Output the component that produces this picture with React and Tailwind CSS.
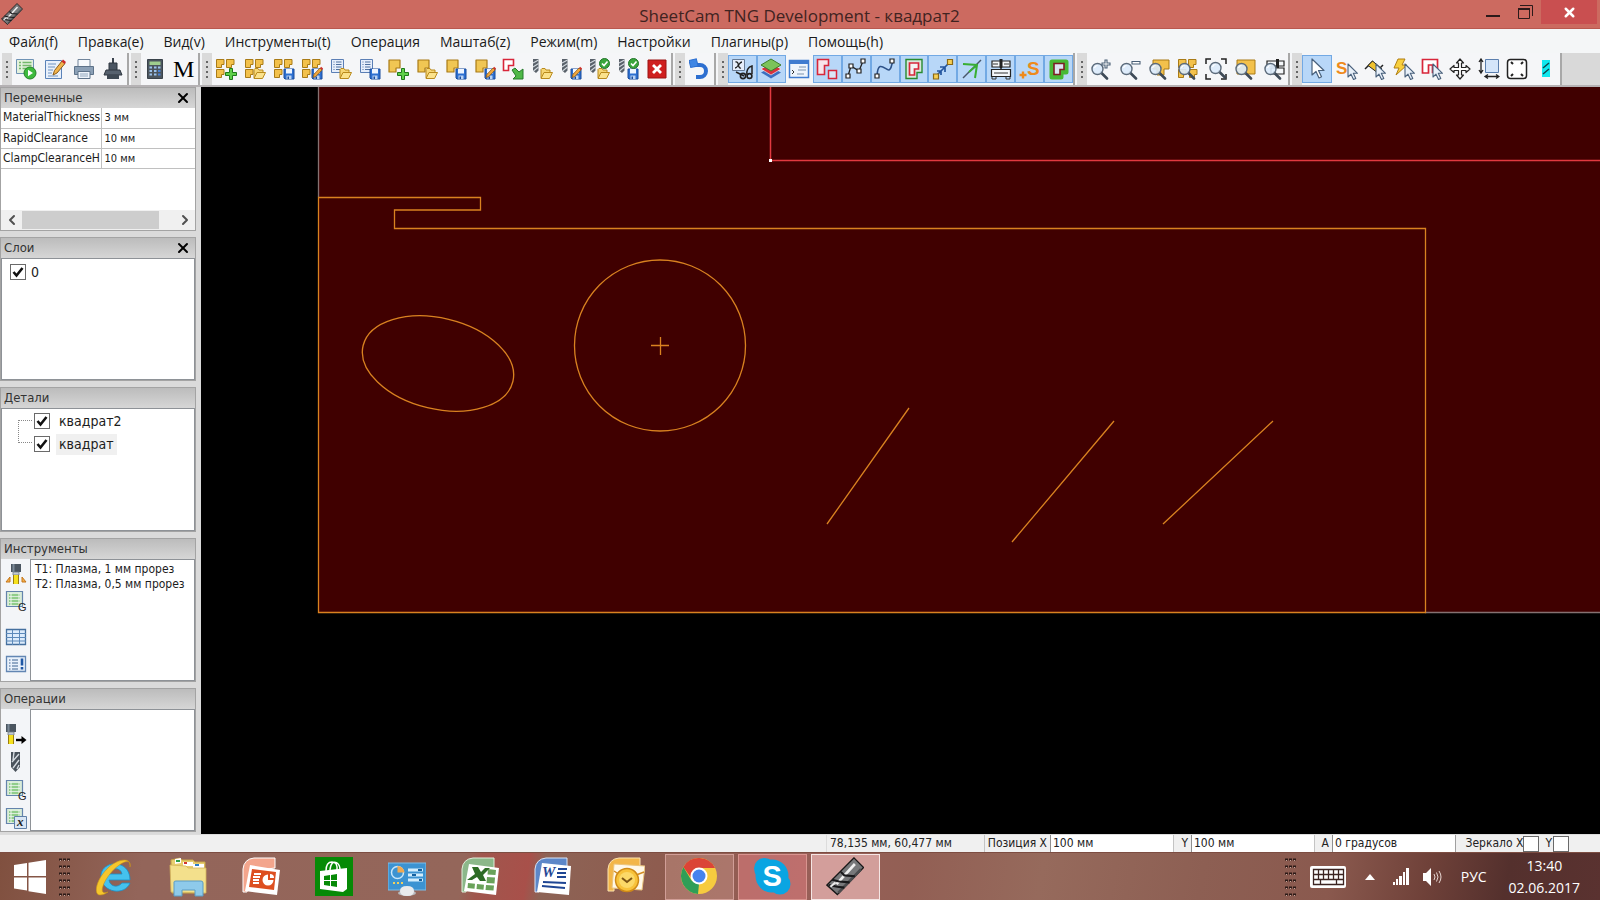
import { X, ChevronLeft, ChevronRight } from 'lucide-react'

const Icon = ({ children, size = 'size-[22px]' }) => (
  <svg viewBox="0 0 22 22" className={`${size} shrink-0`} fill="none" aria-hidden="true">
    {children}
  </svg>
)

/* small shapes the toolbar icons are put together from */

const YELLOW = '#f3c14b'
const OCHRE = '#a97b17'

const PartSmall = ({ x, y }) => (
  <path
    d="M0.5 0.5h7.500v5h-2.500v3h-5z"
    transform={`translate(${x} ${y})`}
    fill={YELLOW}
    stroke={OCHRE}
    strokeWidth="1"
    strokeLinejoin="round"
  />
)

const Parts = () => (
  <>
    <PartSmall x={1} y={1} />
    <PartSmall x={11} y={1} />
    <PartSmall x={1} y={11} />
  </>
)

const Part = () => (
  <path d="M2 2h11v8H9v4H2z" fill="#f0c653" stroke={OCHRE} strokeWidth="1.200" strokeLinejoin="round" />
)

const Folder = () => (
  <>
    <path d="M10 20V11.500l1-1h3l1 1.500h4v2" fill="#f6d675" stroke="#b98a1d" strokeLinejoin="round" />
    <path d="M10 20.500l3-6h8.500l-3 6z" fill="#fbe28c" stroke="#b98a1d" strokeLinejoin="round" />
  </>
)

const Floppy = () => (
  <>
    <path d="M11 11h10v10H12l-1-1z" fill="#2c6fd0" stroke="#1a4c9c" />
    <path d="M13 11h6v4.500h-6z" fill="#eef5ff" />
    <path d="M13.500 17.500h5V21h-5z" fill="#b9d3f5" />
    <path d="M14.500 18.500h1.500V21h-1.500z" fill="#1a4c9c" />
  </>
)

const Pencil = () => (
  <>
    <path d="M12 19.500l1-3.200L19 10l2 2-6.200 6.500z" fill="#f0a63c" stroke="#8d5c16" strokeWidth="0.800" />
    <path d="M19 10l1.200-1.200 2 2L21 12z" fill="#d0322c" />
  </>
)

const Plus = () => (
  <path
    d="M14.500 10.500h3v4h4v3h-4v4h-3v-4h-4v-3h4z"
    fill="#5fd04a"
    stroke="#1f7a1a"
    strokeLinejoin="round"
  />
)

const Doc = () => (
  <>
    <path d="M1.500 1.500h12v13h-12z" fill="#e6eefb" stroke="#5b7fb5" />
    <path d="M3.500 4h1M6 4h5.500M3.500 6.500h1M6 6.500h5.500M3.500 9h1M6 9h5.500M3.500 11.500h1M6 11.500h5.500" stroke="#4d6f9e" />
  </>
)

const Drill = () => (
  <>
    <path d="M2 1h5.500v11.500L5 15l-3-2.500z" fill="#59616a" />
    <path d="M2 5l5.500-3M2 9l5.500-3.500M2.500 13l5-4" stroke="#d3d9df" strokeWidth="1.100" />
  </>
)

const Check = () => (
  <>
    <circle cx="16.500" cy="5.500" r="5" fill="#3aa53c" stroke="#22752a" />
    <path d="M14 5.500l2 2 3.500-4" stroke="#fff" strokeWidth="1.600" />
  </>
)

const Lens = () => (
  <>
    <path d="M11 14.500l6 6" stroke="#3e4a57" strokeWidth="2.600" strokeLinecap="round" />
    <circle cx="7.500" cy="11" r="5.500" fill="#dcebfb" fillOpacity="0.900" stroke="#5c6b7b" strokeWidth="1.400" />
    <path d="M4.500 10a3.500 3.500 0 0 1 3-2.500" stroke="#fff" strokeWidth="1.200" />
  </>
)

const Pointer = ({ x = 0, y = 0 }) => (
  <path
    d="M1 1v13l3-2.800 2.500 5.300 2.300-1-2.500-5.200h4.200z"
    transform={`translate(${x} ${y})`}
    fill="#e9f1fa"
    stroke="#49617c"
    strokeWidth="1.100"
    strokeLinejoin="round"
  />
)

const Nodes = ({ points }) =>
  points.map(([x, y]) => (
    <path key={`${x}-${y}`} d="M0 0h4v4h-4z" transform={`translate(${x} ${y})`} fill="#fff" stroke="#222" strokeWidth="1.200" />
  ))

const Torch = () => (
  <>
    <path d="M6 1h10v8h-10z" fill="#4a5560" />
    <path d="M7.500 1h2v8h-2z" fill="#7b8a98" />
    <path d="M8 9h6v3H8z" fill="#c3cbd3" stroke="#6d7883" strokeWidth="0.800" />
    <path d="M8 12h6v9H8z" fill="#f5e11e" />
    <path d="M8.500 12v9M13.500 12v9" stroke="#9b7e10" />
  </>
)

const Sheet = () => (
  <>
    <path d="M1.500 1.500h16v15h-16z" fill="#d9ecd9" stroke="#6484ad" strokeWidth="1.200" />
    <path d="M4 5h11M4 8h11M4 11h11M4 14h11" stroke="#79c472" strokeWidth="1.600" />
    <path d="M6 3v13M14 3v13" stroke="#eef7ee" />
  </>
)

const CutTool = () => (
  <>
    <path d="M16 0.500L21.500 6 6.500 21.500 0.500 16z" fill="#77787a" stroke="#171717" strokeWidth="0.800" />
    <path d="M20 7L7 20.500" stroke="#4b4c4e" strokeWidth="1.500" />
    <path d="M6 15.500L16.500 4" stroke="#f0f0f0" strokeWidth="1.500" />
    <path d="M3.500 13l4 1 6 .5M1.500 16l5 1 4 .5M8.500 8.500l2 2 6 .5" stroke="#18181a" strokeWidth="1.200" />
    <path d="M2.500 17l3-2.500" stroke="#e8e8e8" strokeWidth="1.200" />
  </>
)

const groups = [
  {
    width: 'w-[115px]',
    tools: [
      ['Запуск', <><path d="M1.500 1.500h17v14h-17z" fill="#e4f1de" stroke="#6f93b5" /><path d="M4 4.500h2M7.500 4.500h9M4 7.500h2M7.500 7.500h9M4 10.500h2M7.500 10.500h4" stroke="#74b96c" strokeWidth="1.500" /><circle cx="15" cy="15" r="6" fill="#3dba3d" stroke="#258127" /><path d="M13 11.800v6.400l5-3.200z" fill="#fff" /></>],
      ['Изменить', <><path d="M1.500 2.500h16v18h-16z" fill="#e8f0fb" stroke="#5a82b8" /><path d="M4 6h8M4 9h7M4 12h5M4 15h4M4 18h10" stroke="#6f93c2" /><path d="M9 17l1.500-4.500L18 3l3 2.500-8 9.500z" fill="#f2b44c" stroke="#8a5d1c" /><path d="M17.500 3.500l1.500-2 3 2.500-1.500 2z" fill="#cc2b2b" /></>],
      ['Печать', <><path d="M5 1.500h12v7H5z" fill="#f6f9fc" stroke="#71849a" /><path d="M1.500 8.500h19v8h-19z" fill="#8ba0b6" stroke="#5d7289" strokeLinejoin="round" /><path d="M5 13.500h12v7H5z" fill="#eef4fb" stroke="#5d7289" /><path d="M7 16h8M7 18h8" stroke="#92a7bd" /></>],
      ['Станок', <><path d="M10 0h2v6h-2z" fill="#3a434d" /><path d="M7 5h8v8H7z" fill="#4b5663" stroke="#2f3740" /><path d="M4 12h14l2 5H2z" fill="#56616e" stroke="#2f3740" /><path d="M5 17h12v4H5z" fill="#3e4853" /></>],
    ],
  },
  {
    width: 'w-[57px]',
    tools: [
      ['Калькулятор', <><path d="M3.500 1.500h15v19h-15z" fill="#4c565f" stroke="#39424a" /><path d="M5.500 3.500h11v3.500h-11z" fill="#9fce8e" /><path d="M5.500 9.500h2.500M10 9.500h2.500M14 9.500h2.500M5.500 13h2.500M10 13h2.500M5.500 16.500h2.500M10 16.500h2.500" stroke="#9cc3ee" strokeWidth="2.200" /><path d="M14 13h2.500M14 16.500h2.500" stroke="#4a83d6" strokeWidth="2.200" /></>],
      ['Макрос', null, 'M'],
    ],
  },
  {
    width: 'w-[459px]',
    tools: [
      ['Новая работа', <><Parts /><Plus /></>],
      ['Открыть работу', <><Parts /><Folder /></>],
      ['Сохранить работу', <><Parts /><Floppy /></>],
      ['Сохранить работу как', <><Parts /><Floppy /><Pencil /></>],
      ['Открыть лист', <><Doc /><Folder /></>],
      ['Сохранить лист', <><Doc /><Floppy /></>],
      ['Новая деталь', <><Part /><Plus /></>],
      ['Открыть деталь', <><Part /><Folder /></>],
      ['Сохранить деталь', <><Part /><Floppy /></>],
      ['Сохранить деталь как', <><Part /><Floppy /><Pencil /></>],
      ['Импорт чертежа', <><path d="M1.500 1.500h10v6h-5v5h-5z" fill="#fff" stroke="#d8263a" strokeWidth="1.600" /><path d="M10 12l3-2 4 4 4-3v10h-10l3-3z" fill="#4fb848" stroke="#257a2a" /></>],
      ['Открыть инструменты', <><Drill /><Folder /></>],
      ['Сохранить инструменты', <><Drill /><Floppy /><Pencil /></>],
      ['Открыть набор', <><Drill /><Folder /><Check /></>],
      ['Сохранить набор', <><Drill /><Floppy /><Check /></>],
      ['Удалить', <><path d="M2 2h18v18H2z" fill="#cf1f1f" stroke="#9a1414" /><path d="M7 7l8 8M15 7l-8 8" stroke="#fff" strokeWidth="2.800" /></>],
    ],
  },
  {
    width: 'w-[29px]',
    tools: [
      ['Отменить', <><path d="M5 7h6a5.500 5.500 0 0 1 0 12H7" stroke="#2d6fd0" strokeWidth="4" /><path d="M1 8.500V1.500l7.500 0v7.500z" fill="#3f86e4" stroke="#2d6fd0" transform="rotate(-14 5 6)" /></>],
    ],
  },
  {
    width: 'w-[345px]',
    tools: [
      ['Переменные', <><path d="M1.500 1.500h12v11h-12z" fill="#e6eefb" stroke="#667a95" /><path d="M4.500 4c4-1 2 7 5.500 6M11 4c-3 0-4 6-7 6" stroke="#222" strokeWidth="1.300" /><path d="M5 14l8 4M16 17c-1-4 1-8 5-9v8" stroke="#222" strokeWidth="1.500" /><circle cx="12" cy="18" r="2.600" stroke="#222" strokeWidth="1.600" /><circle cx="18.500" cy="18" r="2.400" stroke="#222" strokeWidth="1.600" /></>, null, true],
      ['Слои', <><path d="M1 14.500l10 6 10-6-10-5z" fill="#3b6fc0" /><path d="M1 11l10 6 10-6-10-6z" fill="#d8323c" stroke="#fff" strokeWidth="0.600" /><path d="M1 7l10-6 10 6-10 6z" fill="#7cc35a" stroke="#3f7d2c" /></>, null, true],
      ['Консоль', <><path d="M1.500 2.500h19v17h-19z" fill="#eef4fc" stroke="#3f7bd0" strokeWidth="1.500" /><path d="M1 2h20v4H1z" fill="#3f7bd0" /><path d="M11 9h7M10 12h8M9 16h7" stroke="#7d93ad" /><path d="M4 12l2 2-2 2" stroke="#333" /></>],
      ['Контуры', <><path d="M1.500 1.500h11v6h-4v9h-7z" fill="#f8e4ea" stroke="#d8263a" strokeWidth="1.600" /><path d="M12.500 12.500h8v8h-8z" fill="#dbe6f7" stroke="#d8263a" strokeWidth="1.500" /></>, null, true],
      ['Сегменты', <><path d="M3 18l3-10 8 5 4-10" stroke="#222" strokeWidth="1.300" /><Nodes points={[[1, 16], [4, 6], [12, 11], [16, 1]]} /></>, null, true],
      ['Кривые', <><path d="M3 18c1-18 9-5 12-6s2-6 4-8" stroke="#2c5188" strokeWidth="1.600" /><Nodes points={[[1, 16], [16, 1]]} /></>, null, true],
      ['Траектория', <><path d="M3 1.500h16v13h-5v6H3z" fill="#d9e6dc" stroke="#278a2f" strokeWidth="1.400" /><path d="M6.500 5h9v6h-4v6h-5z" fill="#f3f3f3" stroke="#d8263a" strokeWidth="1.700" /></>, null, true],
      ['Переходы', <><path d="M4 18L18 4M8 9h5v5M5 13h4v4" stroke="#24569f" strokeWidth="1.700" /><path d="M1.500 16h5v5h-5zM15.500 1.500h5v5h-5z" fill="#f6cf55" stroke="#8b6914" strokeWidth="1.200" /></>, null, true],
      ['Направление', <><path d="M2 20L20 2" stroke="#49576b" strokeWidth="1.500" /><path d="M2 6l14 1-2 13M16 7L8 14" stroke="#39ae33" strokeWidth="2" /></>, null, true],
      ['Станок', <><path d="M2 3h18v6H2z" fill="#f4f7fa" stroke="#222" strokeWidth="1.200" /><path d="M1.500 11.500h19v7h-19z" fill="#f4f7fa" stroke="#222" strokeWidth="1.200" /><path d="M9.500 1h3v8l-1.500 3-1.500-3z" fill="#222" /><path d="M2 19v2h4v-2M16 19v2h4v-2M3 6h5M14 6h5M4 15h14" stroke="#333" /></>, null, true],
      ['Начальные точки', <><text x="8" y="17" fontSize="19" fontWeight="700" fontFamily="Liberation Sans, sans-serif" fill="#ee8a1c">S</text><path d="M0.500 17h7M4 13.500v7" stroke="#ee8a1c" strokeWidth="2.400" /></>, null, true],
      ['Ширина реза', <><path d="M4 4h14v10h-5v5H4z" fill="#3fae2f" stroke="#48b935" strokeWidth="5" strokeLinejoin="round" /><path d="M6 5.500h10v6h-4v5H6z" fill="#dde6f2" stroke="#7c1f22" strokeWidth="1.600" /></>, null, true],
    ],
  },
  {
    width: 'w-[201px]',
    tools: [
      ['Увеличить', <><Lens /><path d="M15 2h2v3h3v2h-3v3h-2V7h-3V5h3z" fill="#fff" stroke="#4a6076" strokeWidth="1.100" /></>],
      ['Уменьшить', <><Lens /><path d="M13 3.500h8v2.500h-8z" fill="#fff" stroke="#4a6076" strokeWidth="1.100" /></>],
      ['Масштаб детали', <><path d="M5 2h16v9h-5v6h-7V11H5z" fill={YELLOW} stroke={OCHRE} /><Lens /></>],
      ['Масштаб деталей', <><Parts /><PartSmall x={12} y={11} /><Lens /></>],
      ['Масштаб чертежа', <><path d="M1 6V1h5M16 1h5v5M1 16v5h5M16 21h5v-5" stroke="#222" strokeWidth="1.500" /><g transform="translate(3 -1)"><Lens /></g></>],
      ['Масштаб листа', <><path d="M3 2h18v14H3z" fill={YELLOW} stroke={OCHRE} /><Lens /></>],
      ['Масштаб станка', <><path d="M4 3h17v5H4zM8 10h13v6H8z" fill="#f4f7fa" stroke="#222" strokeWidth="1.200" /><path d="M13 1h3v9h-3z" fill="#222" /><Lens /></>],
    ],
  },
  {
    width: 'w-[258px]',
    tools: [
      ['Выбор', <g transform="translate(5 1)"><path d="M1 0v16l4-3.500 3 6.500 2.500-1.200-3-6.300H13z" fill="#fff" stroke="#49617c" strokeWidth="1.200" strokeLinejoin="round" /></g>, null, true],
      ['Точка начала', <><text x="0" y="16" fontSize="17" fontWeight="700" fontFamily="Liberation Sans, sans-serif" fill="#ee8a1c">S</text><Pointer x={11} y={5} /></>],
      ['Перемычки', <><path d="M1 11l8-8M13 13l6-6" stroke="#222" strokeWidth="1.500" /><path d="M4 7.500L8.500 3 18 11l-4 4z" fill="#f0c22e" stroke="#222" /><Pointer x={11} y={5} /></>],
      ['Прожиг', <><path d="M5 1h7L9 7h5L3 17l3-7H1z" fill="#f8cf3e" stroke="#b07f12" /><Pointer x={11} y={5} /></>],
      ['Контур', <><path d="M1.500 1.500h15v13h-5V7h-4v8h-6z" fill="#fff" stroke="#d8263a" strokeWidth="1.700" /><Pointer x={11} y={5} /></>],
      ['Сдвиг', <path d="M11 1l3.500 4h-2v4.500H17v-2l4 3.500-4 3.500v-2h-4.500V17h2L11 21l-3.500-4h2v-4.500H5v2L1 11l4-3.500v2h4.500V5h-2z" fill="#fff" stroke="#222" strokeWidth="1.200" strokeLinejoin="round" />],
      ['Размер', <><path d="M7.500 1.500h13v13h-13z" fill="#d4e5fa" stroke="#5b7fae" /><path d="M3 2v12M1 4l2-3 2 3M1 12l2 3 2-3M8 18.500h12M10 16.500l-3 2 3 2M18 16.500l3 2-3 2" stroke="#222" strokeWidth="1.300" /></>],
      ['Крепёж', <><rect x="1.500" y="1.500" width="19" height="19" rx="3" fill="#fff" stroke="#222" strokeWidth="1.500" /><path d="M5 4l2 2M17 4l-2 2M5 18l2-2M17 18l-2-2" stroke="#222" strokeWidth="2" /></>],
      ['Штриховка', <><path d="M7 2h8v17H7z" fill="#10e7ee" /><path d="M8 10l6-5M8 16l6-5" stroke="#12454a" strokeWidth="1.500" /></>],
    ],
  },
]

const menus = [
  'Файл(f)', 'Правка(e)', 'Вид(v)', 'Инструменты(t)', 'Операция',
  'Маштаб(z)', 'Режим(m)', 'Настройки', 'Плагины(p)', 'Помощь(h)',
]

const TitleBar = () => (
  <header className="relative flex h-[29px] shrink-0 items-start border-b border-[#b9584f] bg-[#cc6a60] pr-6">
    <div className="pt-[3px] pl-px">
      <Icon><CutTool /></Icon>
    </div>
    <h1 className="flex-1 text-center font-['Open_Sans',sans-serif] text-[17px] leading-[31px] text-[#402321]">
      SheetCam TNG Development - квадрат2
    </h1>
    <div className="absolute top-0 right-[3px] flex text-[#2b1a1a]">
      <button aria-label="Свернуть" className="flex h-6 w-8 items-end justify-center pb-[7px]">
        <span className="h-[2px] w-[14px] bg-[#2b1a1a]" />
      </button>
      <button aria-label="Восстановить" className="flex h-6 w-8 items-center justify-center">
        <svg viewBox="0 0 16 16" className="size-4" fill="none" stroke="currentColor">
          <path d="M3 1.500h12.500V12" />
          <path d="M1.500 4.500h11v10h-11z" />
          <path d="M1 5h12" strokeWidth="2" />
        </svg>
      </button>
      <button aria-label="Закрыть" className="flex h-6 w-14 items-center justify-center bg-[#c94f50] text-white">
        <X size={15} strokeWidth={4} />
      </button>
    </div>
  </header>
)

const MenuBar = () => (
  <nav className="flex h-6 shrink-0 items-center gap-5 bg-[#f4f6f7] pl-[9px] font-['Open_Sans',sans-serif] text-[14px] text-[#1a1a1a]">
    {menus.map((menu) => (
      <button key={menu} className="whitespace-nowrap">{menu}</button>
    ))}
  </nav>
)

const ToolBar = () => (
  <div className="flex h-[34px] shrink-0 overflow-hidden border-b-2 border-[#b5b2b4] bg-[#d9d9d9]">
    {groups.map((group) => (
      <div key={group.width} className="flex shrink-0 border-r-2 border-[#a8a8a8] bg-[#f5f6f8] pl-[2px]">
        <div className="flex w-[10px] flex-col items-center justify-center gap-[3px] bg-[#dadada]">
          <i className="size-[2px] bg-[#666]" />
          <i className="size-[2px] bg-[#666]" />
          <i className="size-[2px] bg-[#666]" />
          <i className="size-[2px] bg-[#666]" />
        </div>
        <div className={`${group.width} flex items-center`}>
          {group.tools.map(([name, art, letter, active]) => (
            <button
              key={name}
              title={name}
              aria-label={name}
              className={`flex h-7 min-w-0 flex-1 items-center justify-center ${
                active ? 'border border-[#72a9e4] bg-[#b8d7f8]' : ''
              }`}>
              {letter ? (
                <span className="font-['Liberation_Serif',serif] text-[24px] leading-7 text-black">{letter}</span>
              ) : (
                <Icon>{art}</Icon>
              )}
            </button>
          ))}
        </div>
      </div>
    ))}
  </div>
)

const Panel = ({ title, closable, children }) => (
  <section className="flex min-h-0 flex-1 flex-col border border-[#a3a3a3] bg-white">
    <div className="flex h-5 shrink-0 items-center justify-between bg-linear-to-b from-[#bcbcbc] to-[#d6d6d6] pr-1 pl-[3px]">
      <h2 className="text-[13px] leading-5 text-[#333]">{title}</h2>
      {closable && (
        <button aria-label="Закрыть панель">
          <X size={16} strokeWidth={3} className="text-black" />
        </button>
      )}
    </div>
    {children}
  </section>
)

const Tick = ({ id, checked }) => (
  <span className="relative flex size-4 shrink-0">
    <input
      id={id}
      type="checkbox"
      defaultChecked={checked}
      className="peer size-4 appearance-none border border-[#6a6a6a] bg-white"
    />
    <svg
      viewBox="0 0 16 16"
      className="pointer-events-none absolute inset-0 hidden size-4 peer-checked:block"
      fill="none"
      stroke="#111"
      strokeWidth="2.600">
      <path d="M3.500 8l3 3.500L12.500 4" />
    </svg>
  </span>
)

const variables = [
  ['MaterialThickness', '3 мм'],
  ['RapidClearance', '10 мм'],
  ['ClampClearanceH', '10 мм'],
]

const SideTool = ({ name, children }) => (
  <button aria-label={name} className="flex h-[22px] items-center justify-center">
    <Icon>{children}</Icon>
  </button>
)

const SideBar = () => (
  <aside className="flex w-[201px] shrink-0 flex-col gap-[6px] bg-[#dadada] pr-[5px] pb-[2px] font-['DejaVu_Sans_Condensed','DejaVu_Sans',sans-serif] text-[#1c1c1c]">
    <Panel title="Переменные" closable>
      <table className="w-full table-fixed border-collapse text-[12px] leading-[19px]">
        <tbody>
          {variables.map(([name, value]) => (
            <tr key={name} className="h-5 border-b border-[#c0c0c0]">
              <td className="w-[100px] border-r border-[#c0c0c0] pl-[2px]">
                <div className="overflow-hidden whitespace-nowrap">{name}</div>
              </td>
              <td className="pl-[3px] text-[11px]">{value}</td>
            </tr>
          ))}
        </tbody>
      </table>
      <div className="mt-auto flex h-5 shrink-0 items-center bg-[#f0f0f0] text-[#505050]">
        <button aria-label="Влево" className="flex w-[21px] justify-center">
          <ChevronLeft size={16} strokeWidth={3} />
        </button>
        <div className="flex h-[18px] flex-1">
          <div className="w-[90%] bg-[#cdcdcd]" />
        </div>
        <button aria-label="Вправо" className="flex w-[21px] justify-center">
          <ChevronRight size={16} strokeWidth={3} />
        </button>
      </div>
    </Panel>

    <Panel title="Слои" closable>
      <div className="flex flex-1 items-start border border-[#8e9297] pt-[5px] pl-2">
        <Tick id="layer-0" checked />
        <label htmlFor="layer-0" className="pl-[5px] text-[14px] leading-4">0</label>
      </div>
    </Panel>

    <Panel title="Детали">
      <div className="flex flex-1 items-start border border-[#8e9297] pt-[2px] pl-4 text-[14px]">
        <div className="mt-[9px] mr-[2px] h-[23px] w-[14px] border border-r-0 border-dotted border-[#888]" />
        <div className="flex flex-col gap-[3px]">
          <div className="flex h-5 items-center gap-[6px]">
            <Tick id="part-2" checked />
            <label htmlFor="part-2" className="px-[3px]">квадрат2</label>
          </div>
          <div className="flex h-5 items-center gap-[6px]">
            <Tick id="part-1" checked />
            <label htmlFor="part-1" className="bg-[#f0f0f0] px-[3px]">квадрат</label>
          </div>
        </div>
      </div>
    </Panel>

    <Panel title="Инструменты">
      <div className="flex flex-1">
        <div className="flex w-[29px] flex-col gap-[5px] bg-[#f3f5f8] pt-1">
          <SideTool name="Новый плазменный инструмент">
            <Torch />
            <path d="M5 14l-4 5h4zM17 14l4 5h-4z" fill="#f6b04a" stroke="#c4761a" />
          </SideTool>
          <SideTool name="Код инструмента">
            <Sheet />
            <text x="13" y="21" fontSize="11" fontFamily="Liberation Sans, sans-serif" fill="#222">G</text>
          </SideTool>
          <div className="h-1" />
          <SideTool name="Таблица инструментов">
            <path d="M1.500 3.500h19v15h-19z" fill="#dcebfb" stroke="#45709f" strokeWidth="1.300" />
            <path d="M1 7.500h20M1 11.500h20M1 15h20M7.500 4v15M14.500 4v15" stroke="#5c89ba" />
          </SideTool>
          <SideTool name="Параметры инструмента">
            <path d="M1.500 3.500h19v15h-19z" fill="#e9f1fb" stroke="#6286b3" strokeWidth="1.300" />
            <path d="M4 7h1.500M7 7h6M4 10h1.500M7 10h6M4 13h1.500M7 13h6M4 16h1.500M7 16h6" stroke="#3d6290" />
            <path d="M17 5.500v7M17 14v2.500" stroke="#1e57a5" strokeWidth="2.600" />
          </SideTool>
        </div>
        <ul className="min-w-0 flex-1 overflow-hidden border border-[#8e9297] pt-[2px] pl-[4px] text-[12px] leading-[15px] whitespace-nowrap">
          <li>T1: Плазма, 1 мм прорез</li>
          <li>T2: Плазма, 0,5 мм прорез</li>
        </ul>
      </div>
    </Panel>

    <Panel title="Операции">
      <div className="flex flex-1">
        <div className="flex w-[29px] flex-col gap-[6px] bg-[#f3f5f8] pt-[14px]">
          <SideTool name="Плазменная резка">
            <g transform="translate(-5 0)"><Torch /></g>
            <path d="M11 17h7" stroke="#000" strokeWidth="2.400" />
            <path d="M16.500 13l5 4-5 4z" fill="#000" />
          </SideTool>
          <SideTool name="Сверление">
            <path d="M6 1h9v15l-4.500 5L6 16z" fill="#49525b" />
            <path d="M8 9l1-8M7 11l7-8M8 17l6-8M12 18l2-4" stroke="#d6dce2" strokeWidth="1.400" />
          </SideTool>
          <SideTool name="Вставить код">
            <Sheet />
            <text x="13" y="21" fontSize="11" fontFamily="Liberation Sans, sans-serif" fill="#222">G</text>
          </SideTool>
          <SideTool name="Переменная">
            <Sheet />
            <path d="M9.500 9.500h12v12h-12z" fill="#d9e6f5" stroke="#5f80a8" />
            <text x="12" y="19" fontSize="13" fontStyle="italic" fontWeight="700" fontFamily="Liberation Serif, serif" fill="#222">x</text>
          </SideTool>
        </div>
        <div className="flex-1 border border-[#8e9297]" />
      </div>
    </Panel>
  </aside>
)

const Drawing = () => (
  <main className="min-w-0 flex-1 overflow-hidden bg-black">
    <svg
      viewBox="201 87 1399 747"
      preserveAspectRatio="xMinYMin slice"
      className="block size-full"
      fill="none"
      strokeWidth="1.300">
      <path d="M318 87h1282v525H318z" fill="#400000" />
      <path d="M318.500 87v110M1425 612.500h175" stroke="#857272" />
      <path d="M770.500 87v73.500H1600" stroke="#e23a40" strokeWidth="1.500" />
      <path d="M769 159h3v3h-3z" fill="#fff" />
      <g stroke="#d98220">
        <path d="M318.500 197.500h162v12.500h-86v18.500h1031v384h-1107z" />
        <circle cx="660" cy="345.500" r="85.500" />
        <path d="M651 345.500h18M660.500 337v18" />
        <ellipse cx="438" cy="363.500" rx="77" ry="45.500" transform="rotate(13.500 438 363.500)" />
        <path d="M827 524l82-116M1012 542l102-121M1163 524l110-103" />
      </g>
    </svg>
  </main>
)

const Field = ({ id, label, value, labelWidth = 'w-[17px]' }) => (
  <div className="flex items-center border-l border-[#c4c4c4]">
    <label htmlFor={id} className={`${labelWidth} pr-[3px] text-right whitespace-nowrap`}>{label}</label>
    <input
      id={id}
      defaultValue={value}
      className="h-[17px] w-[123px] border-l border-[#8f8f8f] bg-white pl-[2px] outline-none"
    />
  </div>
)

const StatusBar = () => (
  <footer className="flex h-[18px] shrink-0 items-stretch justify-end border-t border-[#dcdcdc] bg-[#f0f0f0] pr-[31px] font-['DejaVu_Sans_Condensed','DejaVu_Sans',sans-serif] text-[12px] leading-[17px] text-[#222]">
    <output className="w-[158px] border-l border-[#dcdcdc] pl-[3px]">78,135 мм, 60,477 мм</output>
    <Field id="pos-x" label="Позиция X" value="100 мм" labelWidth="w-[65px]" />
    <Field id="pos-y" label="Y" value="100 мм" />
    <Field id="angle" label="A" value="0 градусов" />
    <div className="flex w-[114px] items-center justify-end border-l border-[#a0a0a0]">
      <label htmlFor="mirror-x" className="whitespace-nowrap">Зеркало X</label>
      <Tick id="mirror-x" />
      <label htmlFor="mirror-y" className="pr-px pl-[6px]">Y</label>
      <Tick id="mirror-y" />
    </div>
  </footer>
)

const apps = [
  ['Internet Explorer', <>
    <path d="M29 23H13c1 7 9 8 13 3h8C29 39 6 36 5 20 4 3 34 1 34 23zM13 17h13c-1-7-12-7-13 0z" fill="#45c2ee" stroke="#1b8fc8" strokeWidth="0.800" />
    <path d="M34 10C36-1 20 2 11 12 0 23-3 38 4 38c3 0 5-1 8-3-5 2-7 0-5-6C12 15 28 2 33 5c1 1 1 3 1 5z" fill="#f6c62c" stroke="#c7921a" strokeWidth="0.600" />
  </>],
  ['Проводник', <>
    <path d="M2 3l9-2 2 2h11l2 2h10v31H3z" fill="#e9cf70" stroke="#c6a548" />
    <path d="M6 2l6-1v5l-6 1z" fill="#fff" /><path d="M7 3h4v2H7z" fill="#2e9d46" />
    <path d="M14 5h10v4H14z" fill="#fff" /><path d="M15 5h3v2h-3z" fill="#d1352e" />
    <path d="M24 7h11v4H24z" fill="#fff" /><path d="M26 7h4v2h-4z" fill="#2a7dc6" />
    <path d="M1 8l16 1 2 2h18v25l-35-1z" fill="#f3e08c" stroke="#d4b55a" strokeWidth="0.800" />
    <path d="M5 25q0-1 2-1h25q2 0 2 2v13h-8v-6H13v6H5z" fill="#8ecaea" stroke="#5b9cc4" />
  </>],
  ['PowerPoint', <>
    <path d="M1 35V12Q2 2 12 1h21v10L9 14 5 35z" fill="#f3a58c" stroke="#fff" />
    <path d="M8 8l30 5-3 25-32-4z" fill="#fff" />
    <path d="M10 12l24 3-2 18-25-3z" fill="#dd4f20" />
    <path d="M12 17h7M11 20h7M11 23h6M11 26h6" stroke="#fff" strokeWidth="1.800" />
    <circle cx="26" cy="23" r="5.500" fill="#fff" /><path d="M26 23v-7h7v7z" fill="#dd4f20" /><path d="M28 21v-4q4 0 4 4z" fill="#fff" />
  </>],
  ['Магазин', <>
    <path d="M0 0h38v39H0z" fill="#068a06" />
    <path d="M5 14l27-3v21l-4 3-23-3z" fill="#fff" />
    <path d="M11 14q0-9 6-9t5 9M15 13q1-10 7-7 3 2 3 7" stroke="#fff" strokeWidth="1.500" />
    <path d="M9 19l6-1v5H9zM16 18l6-1v6h-6zM9 24h6v5l-6-1zM16 24h6v6l-6-1z" fill="#068a06" />
  </>],
  ['Панель управления', <>
    <path d="M0 6h38v27H0z" fill="#3c93d2" stroke="#7cbde8" />
    <circle cx="9.500" cy="15.500" r="6" stroke="#c8e7fb" strokeWidth="1.500" /><path d="M9.500 15.500V9q6 0 7 6.500z" fill="#f2a950" />
    <path d="M20 13h15M20 18h15M20 23h15" stroke="#d3edfc" strokeWidth="3" />
    <path d="M30 13h4M24 18h4M31 23h3" stroke="#15619f" strokeWidth="2" />
    <path d="M5 26h2M9 26h2M13 26h2" stroke="#f1d15d" strokeWidth="2" />
    <ellipse cx="19" cy="36" rx="9" ry="3" fill="#b8bcc0" /><path d="M12 34q0-5 7-5t7 5-7 5-7-5z" fill="#e9ebed" />
  </>],
  ['Excel', <>
    <path d="M1 35V12Q2 2 12 1h21v10L9 14 5 35z" fill="#8cb88a" stroke="#e1efdc" />
    <path d="M8 7l30 4-3 27-32-4z" fill="#fff" />
    <path d="M27 12l8 1-.5 5-8-.5zM26 20l8 .5-.5 6-8-.5zM25 28l8 .5-.5 5-8-.5zM16 27l7 .7-.5 5-7-.7zM7 26l7 .7-.5 5-7-.7z" fill="#6aa25a" />
    <path d="M11 10h6l3 5 4-4h5l-7 7 3 6h-6l-3-4-5 3H6l8-6z" fill="#2d6b24" />
  </>],
  ['Word', <>
    <path d="M1 35V12Q2 2 12 1h21v10L9 14 5 35z" fill="#5d87c8" stroke="#dae5f6" />
    <path d="M8 6l29 3-2 29-32-3z" fill="#fff" />
    <text x="8" y="20" fontSize="15" fontStyle="italic" fontWeight="700" fontFamily="Liberation Serif, serif" fill="#1f4694">W</text>
    <path d="M24 12h9M23 16h9M23 20h9M9 25l23 1M8 29l23 2" stroke="#1f4694" strokeWidth="2" />
  </>],
  ['Outlook', <>
    <path d="M1 34V12Q2 2 12 1h21v10H7v23z" fill="#f3b648" stroke="#fbe3b0" />
    <path d="M7 7l31 2-3 24-30-2z" fill="#fff8e8" stroke="#eac47d" />
    <path d="M7 14l12 8 18-7" stroke="#d38b20" strokeWidth="1.500" />
    <circle cx="20" cy="23" r="11.500" fill="#f8c23a" stroke="#cf8a17" strokeWidth="1.500" />
    <circle cx="20" cy="23" r="8" fill="#fcd968" /><path d="M15 21l5 4 5-4" stroke="#7d5514" strokeWidth="2" />
  </>],
  ['Chrome', <>
    <circle cx="19" cy="19" r="18" fill="#f6cb3f" />
    <path d="M3.400 10L11.500 23.500 19 27l-1 10A18 18 0 0 1 3.400 10z" fill="#2f9e57" />
    <path d="M3.400 10A18 18 0 0 1 35 11H19l-8.500 9z" fill="#db4437" />
    <circle cx="19" cy="19" r="8.500" fill="#fff" /><circle cx="19" cy="19" r="6.500" fill="#4583ee" />
  </>, 'border-[#d19e97] bg-[#d9a59a]/35'],
  ['Skype', <>
    <circle cx="19" cy="19" r="16.500" fill="#0aa5e2" /><circle cx="11.500" cy="11.500" r="10.500" fill="#0aa5e2" /><circle cx="27" cy="27" r="10.500" fill="#0aa5e2" />
    <text x="9.500" y="29" fontSize="29" fontWeight="700" fontFamily="Liberation Sans, sans-serif" fill="#fff">S</text>
  </>, 'border-[#d9948f] bg-[#d77a7b]/60'],
  ['SheetCam', <g transform="scale(1.750)"><CutTool /></g>, 'border-[#f5e6e4] bg-[#e7b3b1]/75'],
]

const Grip = () => (
  <svg viewBox="0 0 12 40" className="h-10 w-3 shrink-0" fill="none" aria-hidden="true">
    {[2, 9, 16, 23, 30, 37].map((y) => (
      <g key={y}>
        <path d={`M0 ${y}.500h11`} stroke="#2c1a17" strokeWidth="2" strokeDasharray="3 1" />
        <path d={`M1 ${y + 1}.500h11`} stroke="#c5a59c" strokeDasharray="1 3" />
      </g>
    ))}
  </svg>
)

const TaskBar = () => (
  <div className="flex h-12 shrink-0 items-center border-t border-[#7d4d42] bg-[linear-gradient(100deg,#80503f_0%,#93655a_9%,#94665a_29%,#a0564d_30%,#a8504a_33%,#8d6355_34%,#8e5b4e_42%,#985f58_50%,#925f54_57%,#966a5c_65%,#8d5f53_75%,#8a594e_83%,#6f4139_89%,#54302d_94%,#5a3230_100%)] font-['Open_Sans',sans-serif] text-white">
    <button aria-label="Пуск" className="flex w-[59px] justify-center">
      <svg viewBox="0 0 32 34" className="h-[34px] w-8" fill="#fff">
        <path d="M0 5l13-2v13H0zM14.500 2.700L32 0v16H14.500zM0 17.500h13v13L0 28.500zM14.500 17.500H32V34l-17.500-2.800z" />
      </svg>
    </button>
    <Grip />
    <div className="flex gap-1 pl-[10px]">
      {apps.map(([name, art, open = 'border-transparent']) => (
        <button key={name} aria-label={name} title={name} className={`flex h-[46px] w-[69px] justify-center border pt-[2px] pr-px ${open}`}>
          <svg viewBox="0 0 38 40" className="h-10 w-[38px]" fill="none">{art}</svg>
        </button>
      ))}
    </div>
    <div className="ml-auto flex items-center pr-5">
      <Grip />
      <button aria-label="Клавиатура" className="ml-3">
        <svg viewBox="0 0 38 24" className="h-6 w-[38px]" fill="none">
          <rect x="1" y="1" width="36" height="22" rx="2" fill="#fff" />
          <path d="M4.500 4.500h30v15h-30zM4.500 9.500h30M4.500 14.500h30M9.500 4.500v10M14.500 4.500v10M19.500 4.500v10M24.500 4.500v10M29.500 4.500v10M11.500 14.500v5M27.500 14.500v5" stroke="#3c2522" strokeWidth="1.300" />
        </svg>
      </button>
      <button aria-label="Скрытые значки" className="ml-[18px]">
        <svg viewBox="0 0 10 6" className="h-[6px] w-[10px]" fill="#fff"><path d="M0 6l5-6 5 6z" /></svg>
      </button>
      <svg viewBox="0 0 16 17" className="ml-[18px] h-[17px] w-4" fill="#fff" aria-hidden="true">
        <path d="M0 14h2v3H0zM3 11h2v6H3zM6 8h3v9H6zM10 4h2v13h-2zM13 0h3v17h-3z" />
      </svg>
      <svg viewBox="0 0 20 20" className="ml-[13px] size-5" fill="none" aria-hidden="true">
        <path d="M1 6h3l5-5v18l-5-5H1z" fill="#fff" />
        <path d="M12 7q2 3 0 6M14.500 5.500q3 4.500 0 9M17 4q4 6 0 12" stroke="#e7d6d2" />
      </svg>
      <button className="ml-[19px] text-[14px]">РУС</button>
      <div className="ml-[22px] text-center text-[14px] leading-[22px]">
        <div>13:40</div>
        <div>02.06.2017</div>
      </div>
    </div>
  </div>
)

const App = () => {
  return (
    <div className="flex h-screen min-h-[600px] flex-col overflow-hidden">
      <TitleBar />
      <MenuBar />
      <ToolBar />
      <div className="flex min-h-0 flex-1">
        <SideBar />
        <Drawing />
      </div>
      <StatusBar />
      <TaskBar />
    </div>
  )
}

export default App
